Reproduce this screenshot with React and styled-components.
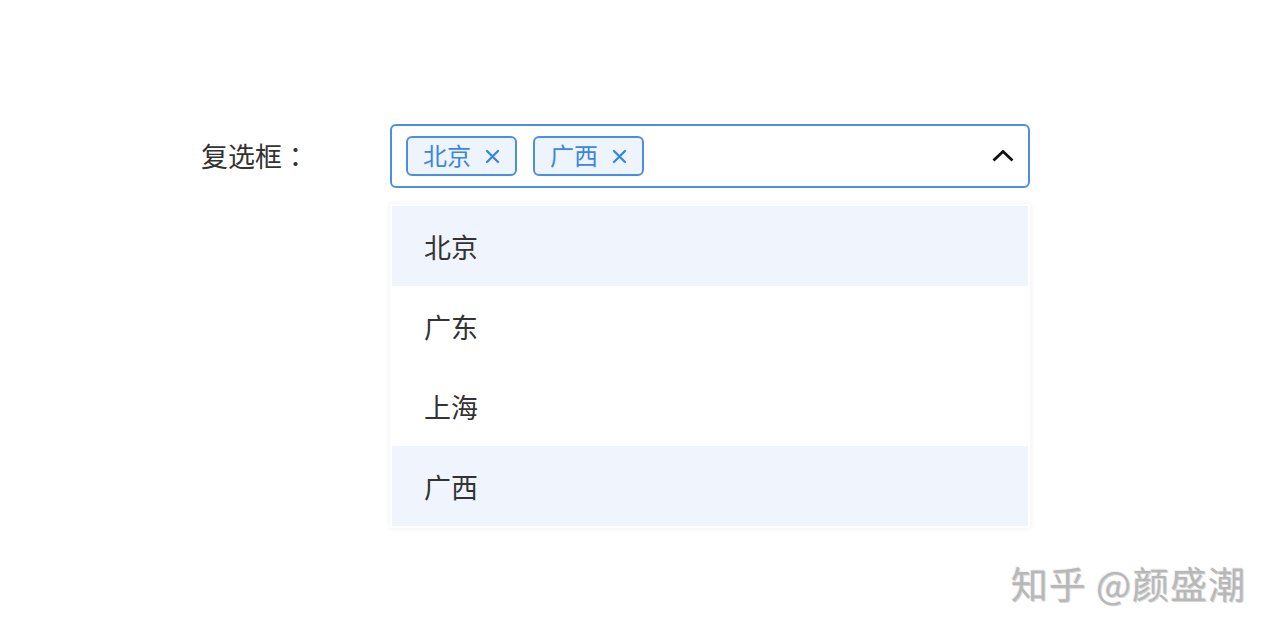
import styled, { createGlobalStyle } from 'styled-components'

const GlobalStyle = createGlobalStyle`
  html, body {
    margin: 0;
    padding: 0;
    background: #fff;
  }
  body {
    font-family: "Noto Sans CJK SC", "Noto Sans", sans-serif;
    color: #333;
  }
`

const Page = styled.div`
  position: relative;
  width: 1278px;
  height: 638px;
  overflow: hidden;
`

const FormRow = styled.div`
  display: grid;
  grid-template-columns: 189px 640px;
  padding: 124px 0 0 201px;
  align-items: start;
`

const Label = styled.label`
  font-size: 27px;
  line-height: 64px;
  color: #333;
`

const Colon = styled.span`
  font-family: "Noto Sans CJK TC", "Noto Sans CJK SC", sans-serif;
`

const Field = styled.div`
  display: flex;
  flex-direction: column;
  gap: 16px;
`

const SelectBox = styled.div`
  box-sizing: border-box;
  height: 64px;
  border: 2px solid #4a8fe2;
  border-radius: 6px;
  display: flex;
  align-items: center;
  padding: 0 14px 0 14px;
  gap: 16px;
`

const Tag = styled.span`
  box-sizing: border-box;
  height: 40px;
  display: inline-flex;
  align-items: center;
  gap: 14px;
  padding: 0 15px 3px 15px;
  border: 2px solid #4a8fe2;
  border-radius: 6px;
  background: #eef4fd;
  color: #3a86e0;
  font-size: 24px;

  svg {
    margin-top: 3px;
  }
`

const Spacer = styled.span`
  flex: 1;
`

const Chevron = styled.svg`
  width: 22px;
  height: 12px;
`

const Menu = styled.ul`
  list-style: none;
  margin: 0;
  padding: 2px;
  box-sizing: border-box;
  background: #fff;
  box-shadow: 0 0 6px rgba(0, 0, 0, 0.08);
`

const Option = styled.li`
  height: 80px;
  display: flex;
  align-items: center;
  padding-left: 32px;
  font-size: 27px;
  color: #333;
  background: ${p => (p.selected ? '#f0f5fd' : '#fff')};
`

const Watermark = styled.div`
  position: absolute;
  right: 32px;
  bottom: 28px;
  font-size: 37px;
  font-weight: 400;
  color: #b8b8b8;
  letter-spacing: 1px;
  text-shadow: 1px 1px 0 #d6d6d6, -1px -1px 0 #f2f2f2;
`

function CloseIcon() {
  return (
    <svg width="15" height="15" viewBox="0 0 15 15">
      <path d="M2 2 L13 13 M13 2 L2 13" stroke="#3a86e0" strokeWidth="2.4" strokeLinecap="round" />
    </svg>
  )
}

const options = [
  { name: '北京', selected: true },
  { name: '广东', selected: false },
  { name: '上海', selected: false },
  { name: '广西', selected: true },
]

export default function App() {
  const chosen = options.filter(o => o.selected)
  return (
    <Page>
      <GlobalStyle />
      <FormRow>
        <Label>复选框<Colon>：</Colon></Label>
        <Field>
          <SelectBox>
            {chosen.map(o => (
              <Tag key={o.name}>
                {o.name}
                <CloseIcon />
              </Tag>
            ))}
            <Spacer />
            <Chevron viewBox="0 0 22 12">
              <path d="M1.5 10.5 L11 1.5 L20.5 10.5" fill="none" stroke="#111" strokeWidth="2.8" />
            </Chevron>
          </SelectBox>
          <Menu>
            {options.map(o => (
              <Option key={o.name} selected={o.selected}>{o.name}</Option>
            ))}
          </Menu>
        </Field>
      </FormRow>
      <Watermark>知乎 @颜盛潮</Watermark>
    </Page>
  )
}
